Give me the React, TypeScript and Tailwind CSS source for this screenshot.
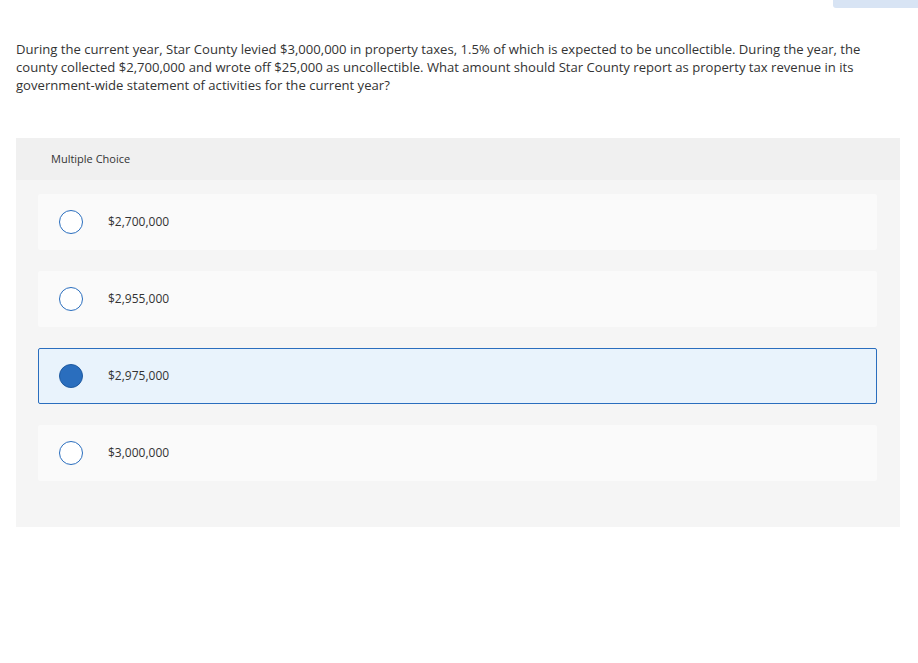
import React from "react";

const options = [
  { label: "$2,700,000", selected: false },
  { label: "$2,955,000", selected: false },
  { label: "$2,975,000", selected: true },
  { label: "$3,000,000", selected: false },
];

export default function App() {
  return (
    <div
      className="relative w-[918px] h-[663px] bg-white text-[#333]"
      style={{ fontFamily: "'Open Sans', Lato, sans-serif" }}
    >
      <div className="absolute right-0 top-0 w-[85px] h-[8px] bg-[#d8e4f4] rounded-bl-[3px]" />
      <div className="pt-[40px] px-[16px]">
        <p className="text-[13.1px] leading-[18px] text-[#333] w-[870px]">
          During the current year, Star County levied $3,000,000 in property taxes, 1.5% of which is expected to be uncollectible. During the year, the county collected $2,700,000 and wrote off $25,000 as uncollectible. What amount should Star County report as property tax revenue in its{" "}
          <span className="whitespace-nowrap">government-wide</span> statement of activities for the current year?
        </p>
      </div>
      <div className="mt-[44px] ml-[16px] w-[884px] bg-[#f5f5f5] pb-[46px]">
        <div className="h-[42px] bg-[#f0f0f0] flex items-center pl-[35px] text-[11px] text-[#333]">
          Multiple Choice
        </div>
        <div className="flex flex-col gap-[21px] mt-[14px] pl-[22px] pr-[23px]">
          {options.map((o) => (
            <div
              key={o.label}
              className={
                o.selected
                  ? "h-[56px] flex items-center bg-[#e9f3fc] border border-[#2a6ebe] rounded-[2px] pl-[20px]"
                  : "h-[56px] flex items-center bg-[#fafafa] border border-transparent rounded-[2px] pl-[20px]"
              }
            >
              {o.selected ? (
                <span className="w-[24px] h-[24px] rounded-full bg-[#2a6ebe] border border-[#1f5aa0]" />
              ) : (
                <span className="w-[24px] h-[24px] rounded-full bg-white border border-[#2a6ebe]" />
              )}
              <span className="ml-[25px] text-[12px] text-[#333]">{o.label}</span>
            </div>
          ))}
        </div>
      </div>
    </div>
  );
}
